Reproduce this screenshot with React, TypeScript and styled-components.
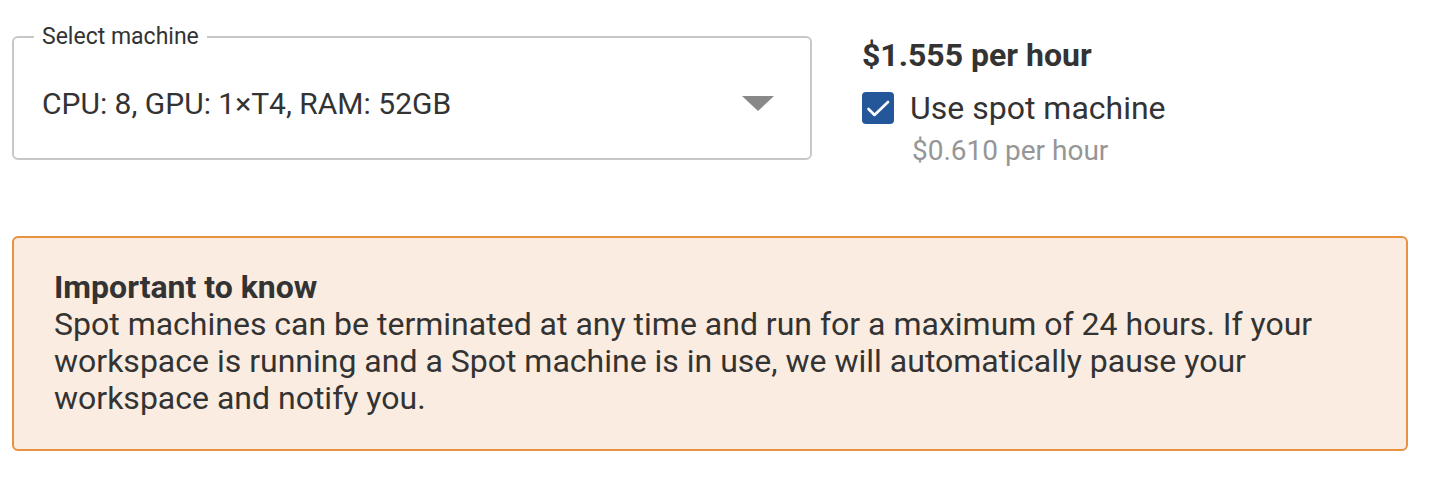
import styled, { createGlobalStyle } from "styled-components";

const GlobalStyle = createGlobalStyle`
  body {
    margin: 0;
    background: #ffffff;
    font-family: Roboto, "Liberation Sans", sans-serif;
    color: #333333;
  }
`;

const Page = styled.div`
  padding: 23px 30px 0 12px;
  display: flex;
  flex-direction: column;
  gap: 68px;
`;

const TopRow = styled.div`
  display: flex;
  align-items: flex-start;
  gap: 50px;
`;

const SelectField = styled.fieldset`
  width: 800px;
  height: 137px;
  box-sizing: border-box;
  margin: 0;
  padding: 0 28px;
  border: 2px solid #c8c8c8;
  border-radius: 6px;
  display: flex;
  align-items: center;
  justify-content: space-between;
`;

const Legend = styled.legend`
  font-size: 23px;
  color: #333333;
  padding: 0 8px;
  margin-left: -8px;
  line-height: 28px;
`;

const SelectValue = styled.span`
  font-size: 30px;
  color: #333333;
  margin-top: -2px;
`;

const Arrow = styled.span`
  width: 0;
  height: 0;
  border-left: 16px solid transparent;
  border-right: 16px solid transparent;
  border-top: 15px solid #888888;
  margin-right: 8px;
  margin-top: -2px;
`;

const PriceColumn = styled.div`
  display: flex;
  flex-direction: column;
  padding-top: 13px;
`;

const Price = styled.div`
  font-size: 32px;
  font-weight: 700;
  line-height: 38px;
`;

const CheckRow = styled.label`
  display: flex;
  align-items: center;
  gap: 16px;
  margin-top: 16px;
  font-size: 32px;
  line-height: 36px;
`;

const CheckBox = styled.span`
  width: 32px;
  height: 32px;
  border-radius: 4px;
  background: #23579a;
  display: flex;
`;

const SpotPrice = styled.div`
  font-size: 28px;
  color: #969696;
  margin-left: 50px;
  margin-top: 8px;
  line-height: 34px;
`;

const Alert = styled.div`
  width: 1396px;
  box-sizing: border-box;
  border: 2px solid #e8913e;
  background: #faece0;
  border-radius: 6px;
  padding: 31px 40px 32px 40px;
  font-size: 32px;
  line-height: 37px;
`;

const AlertTitle = styled.div`
  font-weight: 700;
`;

export default function App() {
  return (
    <>
      <GlobalStyle />
      <Page>
        <TopRow>
          <SelectField>
            <Legend>Select machine</Legend>
            <SelectValue>CPU: 8, GPU: 1×T4, RAM: 52GB</SelectValue>
            <Arrow />
          </SelectField>
          <PriceColumn>
            <Price>$1.555 per hour</Price>
            <CheckRow>
              <CheckBox>
                <svg width="32" height="32" viewBox="0 0 32 32" fill="none">
                  <path
                    d="M6.5 17l6 6L26 10"
                    stroke="#ffffff"
                    strokeWidth="2.6"
                    strokeLinecap="round"
                    strokeLinejoin="round"
                  />
                </svg>
              </CheckBox>
              Use spot machine
            </CheckRow>
            <SpotPrice>$0.610 per hour</SpotPrice>
          </PriceColumn>
        </TopRow>
        <Alert>
          <AlertTitle>Important to know</AlertTitle>
          Spot machines can be terminated at any time and run for a maximum of 24 hours. If your
          workspace is running and a Spot machine is in use, we will automatically pause your
          workspace and notify you.
        </Alert>
      </Page>
    </>
  );
}
